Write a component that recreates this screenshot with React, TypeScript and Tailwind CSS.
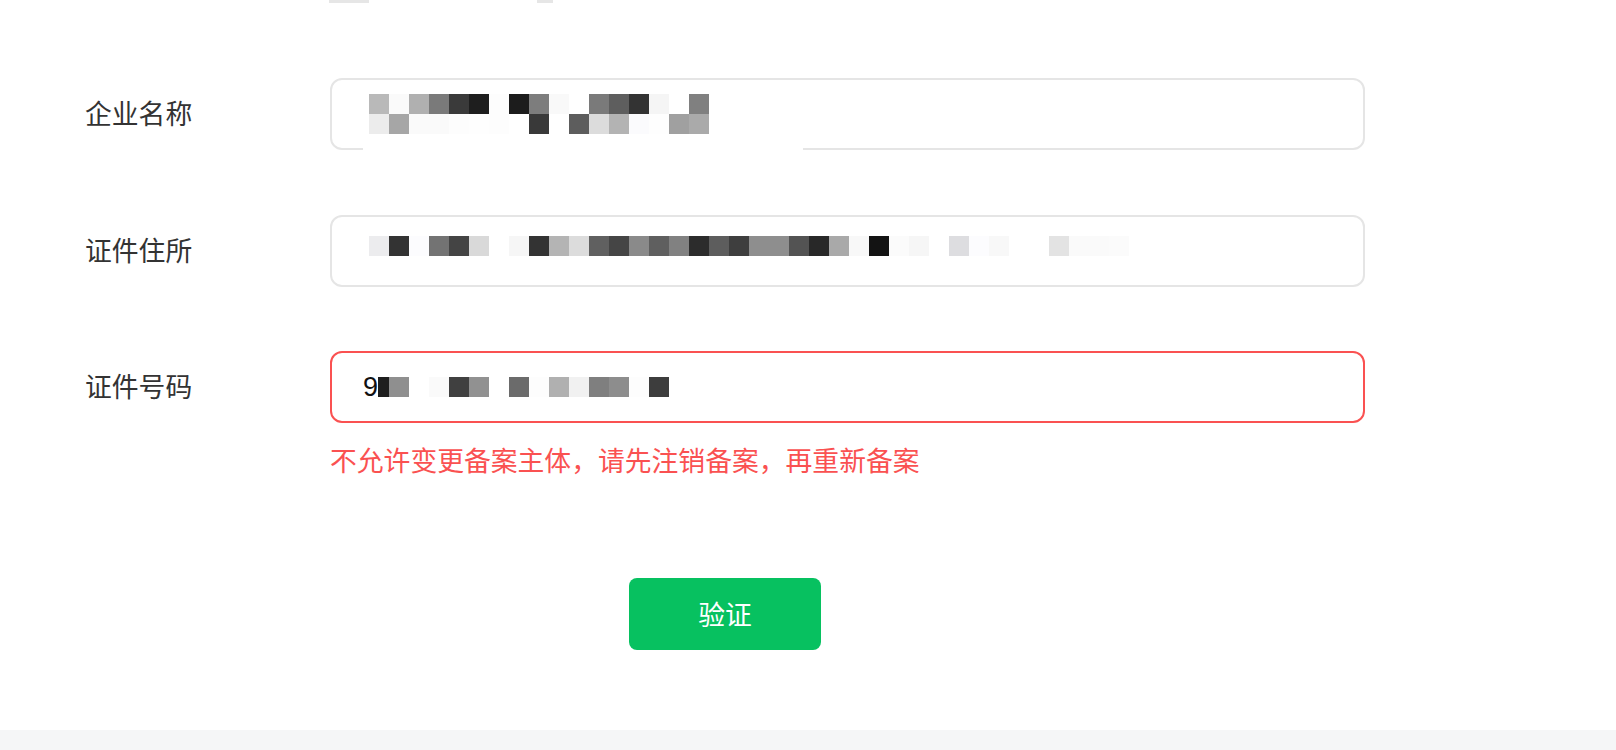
const row1a = ["#b9b9b9", "#fafafa", "#b0b0b0", "#7a7a7a", "#3a3a3a", "#1e1e1e", "#fdfdfd", "#1c1c1c", "#7d7d7d", "#f9f9f9", "#ffffff", "#7a7a7a", "#5e5e5e", "#333333", "#f5f5f5", "#ffffff", "#808080"];
const row1b = ["#ececec", "#a6a6a6", "#fafafa", "#fafafa", "#fdfdfd", "#fefefe", "#fdfdfd", "#ffffff", "#393939", "#ffffff", "#5d5d5d", "#dcdcdc", "#b3b3b3", "#fbfbfd", "#fefefe", "#a0a0a0", "#aaaaaa"];
const row2 = ["#ececee", "#333333", "#fcfcfe", "#737373", "#444444", "#d9d9d9", "#ffffff", "#f6f6f6", "#333333", "#b4b4b4", "#dcdcdc", "#606060", "#454545", "#8a8a8a", "#5f5f5f", "#818181", "#2c2c2c", "#5d5d5d", "#3e3e3e", "#8e8e8e", "#8e8e8e", "#535353", "#282828", "#a9a9a9", "#f8f8f8", "#131313", "#fbfbfb", "#f6f6f6", "#ffffff", "#dddde0", "#fcfcfe", "#f8f8f8", "#ffffff", "#ffffff", "#e3e3e3", "#fafafa", "#fafafa", "#fbfbfb"];
const row3 = ["#8f8f8f", "#ffffff", "#fafafa", "#404040", "#919191", "#ffffff", "#6b6b6b", "#fdfdfd", "#b0b0b0", "#f1f1f1", "#7f7f7f", "#8d8d8d", "#fdfdfd", "#3d3d3d"];

function Mosaic({ colors }: { colors: string[] }) {
    return (
        <div className="flex">
            {colors.map((c, i) => (
                <div key={i} className="w-[20px] h-[20px]" style={{ backgroundColor: c }} />
            ))}
        </div>
    );
}

function Row({ label, children, error }: { label: string; children: React.ReactNode; error?: boolean }) {
    return (
        <div className="flex items-center">
            <div className="w-[245px] shrink-0 text-[26.8px] text-[#333] -mt-[2px]">{label}</div>
            <div
                className={
                    error
                        ? "relative flex items-center w-[1035px] h-[72px] rounded-[12px] border-2 border-[#fa5151] pl-[37px]"
                        : "relative flex items-center w-[1035px] h-[72px] rounded-[12px] border-2 border-[#e5e5e5] pl-[37px]"
                }
            >
                {children}
            </div>
        </div>
    );
}

export default function App() {
    return (
        <div
            className="flex flex-col w-full h-[750px] bg-white overflow-hidden"
            style={{ fontFamily: '"Noto Sans CJK SC", "Noto Sans", sans-serif' }}
        >
            <div className="flex h-[78px] pl-[329px] gap-[168px]">
                <div className="w-[40px] h-[3px] bg-[#e6e6e6]" />
                <div className="w-[16px] h-[3px] bg-[#e6e6e6]" />
            </div>
            <div className="flex flex-col pl-[85px]">
                <Row label="企业名称">
                    <div className="flex flex-col">
                        <Mosaic colors={row1a} />
                        <Mosaic colors={row1b} />
                    </div>
                    <div className="absolute left-[31px] bottom-[-3px] w-[440px] h-[4px] bg-white" />
                </Row>
                <div className="mt-[65px]">
                    <Row label="证件住所">
                        <div className="mb-[10px]">
                            <Mosaic colors={row2} />
                        </div>
                    </Row>
                </div>
                <div className="mt-[64px]">
                    <Row label="证件号码" error>
                        <span
                            className="-ml-[6px] text-[27px] text-[#111] leading-none"
                            style={{ fontFamily: '"Liberation Sans", Arial, sans-serif' }}
                        >
                            9
                        </span>
                        <div className="w-[11px] h-[20px] bg-[#1e1e1e]" />
                        <Mosaic colors={row3} />
                    </Row>
                </div>
                <p className="ml-[245px] mt-[19px] text-[26.8px] leading-[36px] text-[#fa5151]">
                    不允许变更备案主体，请先注销备案，再重新备案
                </p>
                <div className="ml-[544px] mt-[100px]">
                    <button className="w-[192px] h-[72px] rounded-[8px] bg-[#07c160] text-white text-[26.8px]">
                        验证
                    </button>
                </div>
            </div>
            <div className="mt-auto h-[20px] bg-[#f5f6f7]" />
        </div>
    );
}
